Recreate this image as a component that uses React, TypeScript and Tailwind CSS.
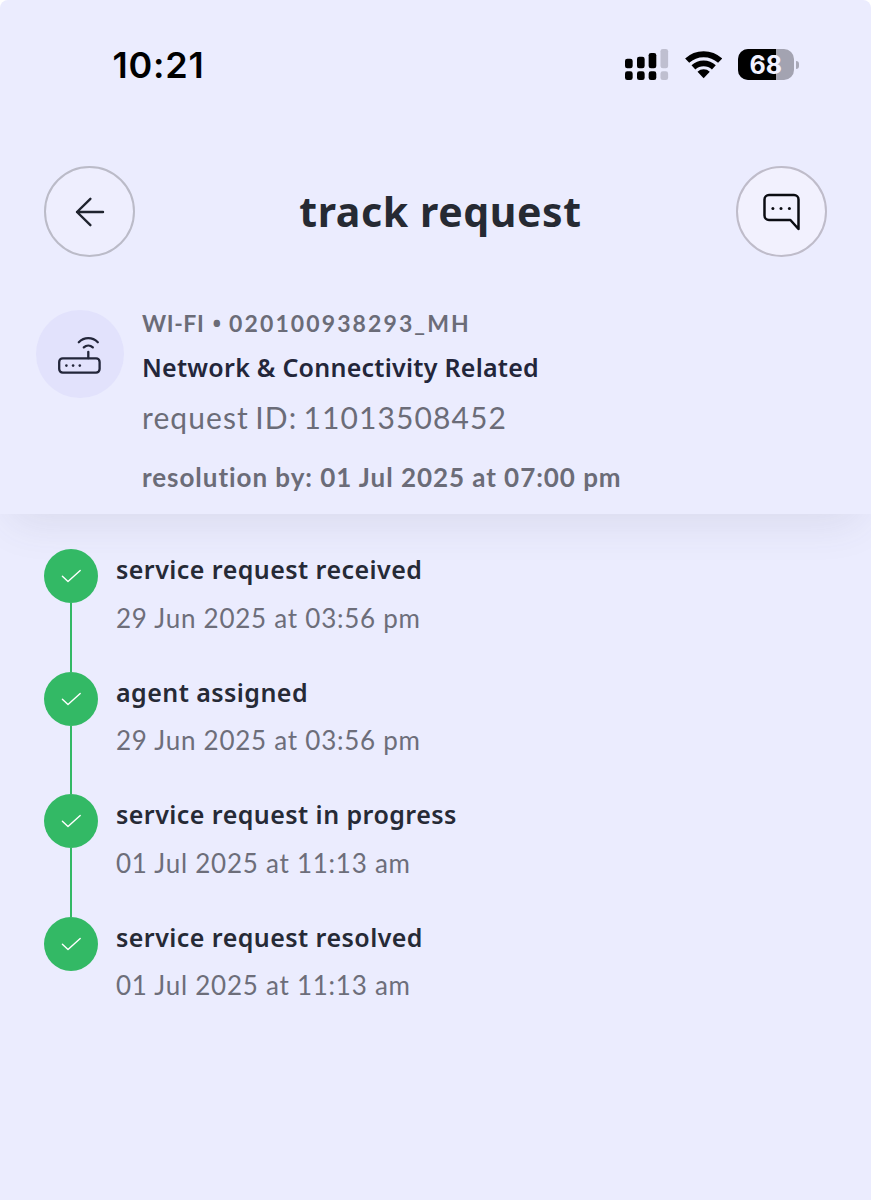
interface Step {
  title: string;
  time: string;
}

const steps: Step[] = [
  { title: "service request received", time: "29 Jun 2025 at 03:56 pm" },
  { title: "agent assigned", time: "29 Jun 2025 at 03:56 pm" },
  { title: "service request in progress", time: "01 Jul 2025 at 11:13 am" },
  { title: "service request resolved", time: "01 Jul 2025 at 11:13 am" },
];

export default function App() {
  return (
    <div className="bg-white">
      <main className="h-[1200px] w-[871px] overflow-hidden rounded-t-lg bg-[#ebecfe] font-['Noto_Sans',sans-serif] text-[#262a36]">
        <header className="h-[514px] shadow-[0_18px_42px_-12px_rgba(70,70,100,0.12)]">
          <StatusBar />
          <NavBar />
          <RequestInfo />
        </header>

        {/* Timeline */}
        <ul className="pt-[35px] pl-[44px]">
          {steps.map((step, i) => (
            <TimelineStep key={i} step={step} isLast={i === steps.length - 1} />
          ))}
        </ul>
      </main>
    </div>
  );
}

function StatusBar() {
  return (
    <div className="flex h-[130px] items-center justify-between pr-[72.5px] pl-[112.5px] text-black">
      <span className="font-['Inter',sans-serif] text-[36px] leading-none font-semibold tracking-[0.8px]">10:21</span>
      <div className="flex items-center gap-4">
        <SignalIcon />
        <WifiIcon />
        <Battery level={68} />
      </div>
    </div>
  );
}

function NavBar() {
  return (
    <div className="mt-9 flex items-center justify-between px-[44px]">
      <button aria-label="back" className="flex size-[91px] items-center justify-center rounded-full border-2 border-[#bbbbc8] bg-[#eeeefe]">
        <svg className="size-8" viewBox="0 0 32 32" fill="none" stroke="#20242f" strokeWidth="2.4" strokeLinecap="round" strokeLinejoin="round">
          <path d="M29 16H3M16.4 2.8 3 16l13.4 13.2" />
        </svg>
      </button>
      <h1 className="pb-[2px] pl-[10px] text-[41px] leading-[50px] font-bold tracking-[0.6px] text-[#262a33]">track request</h1>
      <button aria-label="chat" className="flex size-[91px] items-center justify-center rounded-full border-2 border-[#bfbcca] bg-[#f2f1fe]">
        <svg className="size-10" viewBox="0 0 40 40" fill="none" stroke="#0b0c12" strokeWidth="2.5" strokeLinejoin="round">
          <path d="M29.4 28H8a4.5 4.5 0 0 1-4.5-4.5v-16A4.5 4.5 0 0 1 8 3h25a4.5 4.5 0 0 1 4.5 4.5V37Z" />
          <g fill="#0b0c12" stroke="none">
            <circle cx="11.9" cy="16.6" r="1.5" />
            <circle cx="20" cy="16.6" r="1.5" />
            <circle cx="28.4" cy="16.6" r="1.5" />
          </g>
        </svg>
      </button>
    </div>
  );
}

function RequestInfo() {
  return (
    <section className="mt-[51px] flex gap-[18px] pl-[36px]">
      <div className="mt-[2px] size-[88px] shrink-0 rounded-full bg-[#e2e2fc]">
        <RouterIcon />
      </div>
      <div className="whitespace-nowrap text-[#6b6c78]">
        <p className="flex gap-2 pt-px font-['Lato',sans-serif] text-[23px] leading-[28px] font-bold">
          <span className="tracking-[0.6px]">WI-FI</span>
          <span className="font-['Noto_Sans',sans-serif]">•</span>
          <span className="tracking-[2.1px]">020100938293_MH</span>
        </p>
        <h2 className="mt-[12px] text-[25px] leading-[36px] font-semibold tracking-[0.25px] text-[#23263a]">Network &amp; Connectivity Related</h2>
        <p className="mt-[12px] font-['Lato',sans-serif] text-[30px] leading-[40px] tracking-[1.1px] [word-spacing:-2.5px]">request ID: 11013508452</p>
        <p className="mt-[22px] font-['Lato',sans-serif] text-[26px] leading-[36px] font-bold tracking-[0.95px]">resolution by: 01 Jul 2025 at 07:00 pm</p>
      </div>
    </section>
  );
}

function TimelineStep({ step, isLast }: { step: Step; isLast: boolean }) {
  return (
    <li className="flex h-[122.67px] gap-[18px]">
      <div className="flex flex-col items-center">
        <span className="size-[54px] shrink-0 rounded-full bg-[#33b965]">
          <svg viewBox="0 0 54 54" fill="none" stroke="#fff" strokeWidth="1.4" strokeLinecap="round" strokeLinejoin="round">
            <path d="m18.4 27.3 5.6 5.3L36.2 21.4" />
          </svg>
        </span>
        {!isLast && <span className="w-[2px] flex-1 bg-[#33b965]" />}
      </div>
      <div className="pt-[2px] whitespace-nowrap">
        <h3 className="text-[25px] leading-[36px] font-semibold tracking-[0.45px]">{step.title}</h3>
        <p className="mt-[12.5px] font-['Lato',sans-serif] text-[26px] leading-[36px] tracking-[0.75px] text-[#6d6e7a]">{step.time}</p>
      </div>
    </li>
  );
}

// --- Icons ---

function SignalIcon() {
  const bars = [
    { x: 0, y: 29, color: "#000" },
    { x: 36, y: 23, color: "#000" },
    { x: 71, y: 12, color: "#000" },
    { x: 106.5, y: 0, color: "#bfbfd0" },
  ];
  return (
    <svg className="h-[31.3px] w-[43.3px]" viewBox="0 0 130 94">
      {bars.map((bar) => (
        <g key={bar.x} fill={bar.color}>
          <rect x={bar.x} y={bar.y} width="23" height={58 - bar.y} rx="7" />
          <rect x={bar.x} y="67" width="23" height="26" rx="7" />
        </g>
      ))}
    </svg>
  );
}

function WifiIcon() {
  return (
    <svg className="h-[27.3px] w-[37.3px]" viewBox="0 0 112 82" fill="none" stroke="#000">
      <path d="M6.5 29a72.5 72.5 0 0 1 99 0" strokeWidth="18" />
      <path d="M25.3 49.1a45 45 0 0 1 61.4 0" strokeWidth="17" />
      <path d="M56 82 37.6 62.3a27 27 0 0 1 36.8 0Z" fill="#000" stroke="none" />
    </svg>
  );
}

function Battery({ level }: { level: number }) {
  return (
    <div className="flex items-center gap-[2px]">
      <div className="relative flex h-[31px] w-[55.5px] items-center justify-center overflow-hidden rounded-[10px] bg-[#a3a3b1]">
        <div className="absolute inset-y-0 left-0 bg-black" style={{ width: `${level}%` }} />
        <span className="relative pt-px font-['Inter',sans-serif] text-[25px] leading-none font-bold text-[#f1f1ff]">{level}</span>
      </div>
      <div className="h-[8px] w-[3px] rounded-r-full bg-[#a9a9b8]" />
    </div>
  );
}

function RouterIcon() {
  return (
    <svg viewBox="0 0 88 88" fill="none" stroke="#23263a" strokeWidth="2.3" strokeLinecap="round">
      <rect x="23.2" y="48.4" width="40.4" height="14.2" rx="3.5" />
      <path d="M52.3 41.8v6.4M47.8 37.4c2.6-2.4 6.4-2.4 9 0M42.8 32.2c5.4-5.4 13.6-5.4 19 0" />
      <g fill="#23263a" stroke="none">
        <circle cx="30.4" cy="55.6" r="1.3" />
        <circle cx="37.1" cy="55.6" r="1.3" />
        <circle cx="43.8" cy="55.6" r="1.3" />
      </g>
    </svg>
  );
}
